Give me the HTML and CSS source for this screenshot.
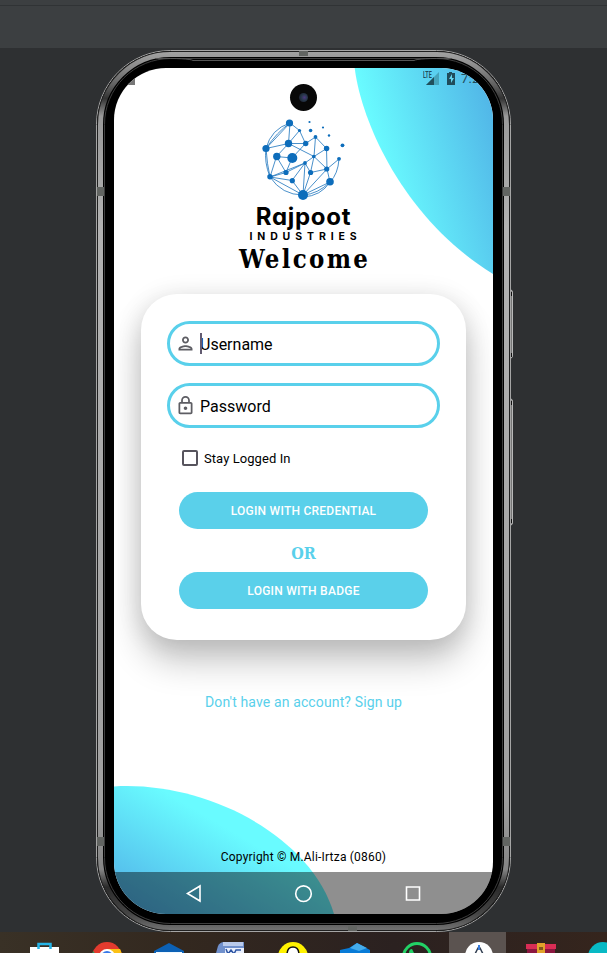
FILE: index.html
```html
<!DOCTYPE html>
<html lang="en">
<head>
<meta charset="utf-8">
<title>Rajpoot Industries</title>
<link rel="stylesheet" href="styles.css">
</head>
<body>
<div class="desktop">
  <header class="toolbar"></header>
  <main class="stage">
    <div class="phone">
      <svg class="frame" width="422" height="884" viewBox="94 49 422 884" fill="none">
        <defs>
          <linearGradient id="metal" x1="0" y1="50" x2="0" y2="931" gradientUnits="userSpaceOnUse">
            <stop offset="0" stop-color="#a5a5a5"/><stop offset=".02" stop-color="#8a8a8a"/><stop offset=".04" stop-color="#606060"/><stop offset=".055" stop-color="#333"/><stop offset=".075" stop-color="#999"/><stop offset=".2" stop-color="#b2b2b2"/><stop offset=".85" stop-color="#a0a0a0"/><stop offset=".93" stop-color="#858585"/><stop offset=".95" stop-color="#2b2b2b"/><stop offset=".98" stop-color="#444"/><stop offset="1" stop-color="#747474"/>
          </linearGradient>
        </defs>
        <path d="M508 290h3q1.500 0 1.500 3v62q0 3-1.500 3h-3zM508 399h3q1.500 0 1.500 3v120q0 3-1.500 3h-3z" fill="#777" stroke="#b8b8b8"/>
        <path d="M511 292v4M511 353v4M511 401v4M511 519v4" stroke="#111" stroke-width="2"/>
        <rect x="96.500" y="50.500" width="414" height="881" rx="74" fill="#000" stroke="#a5a5a5"/>
        <rect x="97.500" y="51.500" width="412" height="879" rx="73" stroke="#202020"/>
        <rect x="100.500" y="54.500" width="406" height="873" rx="70" stroke="url(#metal)" stroke-width="5"/>
        <rect x="104.500" y="58.500" width="398" height="865" rx="66" stroke="#3e3e3e"/>
        <path d="M155 58.500q34-.5 38 2h221q4-2.500 38-2" stroke="#555"/>
        <path d="M299 51h9v5h-9zM348 926h9v5h-9zM97 187h7v9h-7zM503 187h7v9h-7zM97 837h7v9h-7zM503 837h7v9h-7z" fill="#626562"/>
      </svg>
      <div class="screen">
        <svg class="waves" width="379" height="846" viewBox="114 68 379 846">
          <defs>
            <linearGradient id="g1" x1="374" y1="140" x2="500" y2="105" gradientUnits="userSpaceOnUse"><stop stop-color="#69fbff"/><stop offset="1" stop-color="#50b2e6"/></linearGradient>
            <linearGradient id="g2" x1="208" y1="817" x2="148" y2="919" gradientUnits="userSpaceOnUse"><stop stop-color="#69fbff"/><stop offset="1" stop-color="#51b2e8"/></linearGradient>
          </defs>
          <path fill="url(#g1)" d="M354.700 68C361 120 402 218 493 274V68z"/>
          <path fill="url(#g2)" d="M114 786.500C205 781 311 835 334 914H114z"/>
        </svg>
        <div class="status">
          <span class="lte">LTE</span>
          <svg width="60" height="18" viewBox="426 70 60 18"><path d="M439 72v13h-13z" fill="#20565f" opacity=".35"/><path d="M434 77v8h-8z" fill="#20505d"/><path d="M449 72h3v1h3v12h-8V73h2z" fill="#204c5b"/><path d="M452 74l-3 5h2v4l3-5h-2z" fill="#65d5ef"/></svg>
          <span class="clock">7:26</span>
        </div>
        <div class="notch"></div>
        <div class="camera"><i></i></div>
        <section class="brand">
          <svg class="globe" width="90" height="88" viewBox="258 115 90 88">
            <g fill="none" stroke="#1c74bd" stroke-width=".8">
              <path d="M290 123L266 148.500 288.500 143.500 290 123 299.500 130.500 288.500 143.500H305.500L299.500 130.500M305.500 143.500L315.500 137 326.500 148.500 314 156.500 288.500 143.500 276.500 156.500 292 158 305.500 143.500M315.500 137L314 156.500 327 169 326.500 148.500M314 156.500L310.500 172.500 327 169 339 159M305 163L314 156.500M305 163L303 195 310.500 172.500 305 163M305 163L286 172.500 276.500 156.500 270 177 286 172.500 292 158M305 163L270 177 292 180.500 305 163M292 180.500L303 195 270 177M303 195L327 169 330 182 303 195"/>
              <path d="M290 123Q271 129 266 148.500Q264 162 270 177Q282 195 303 195Q318 194 330 182Q338 174 339 159M266 148.500Q267 164 270 177M303 197Q321 196 330 182M290 123Q277 132 266 148.500"/>
            </g>
            <g fill="#0d6dbb"><circle cx="289.500" cy="123" r="3.600"/><circle cx="266" cy="148.500" r="3.600"/><circle cx="288.500" cy="143.500" r="3.700"/><circle cx="276.800" cy="156.500" r="3.700"/><circle cx="292.300" cy="158" r="5"/><circle cx="303" cy="195" r="5"/><circle cx="330" cy="181.800" r="3.800"/><circle cx="305.700" cy="143.500" r="2.700"/><circle cx="299.500" cy="130.500" r="1.600"/><circle cx="315.500" cy="137" r="1.900"/><circle cx="326.600" cy="148.500" r="2.700"/><circle cx="313.800" cy="156.500" r="1.800"/><circle cx="305" cy="163" r="1.900"/><circle cx="326.700" cy="169" r="2.600"/><circle cx="310.600" cy="172.500" r="2.600"/><circle cx="286" cy="172.500" r="2.600"/><circle cx="270" cy="176.800" r="2.700"/><circle cx="292.300" cy="180.700" r="2.600"/><circle cx="339" cy="158.800" r="1.900"/><circle cx="342.500" cy="145.300" r="1.900"/><circle cx="310.600" cy="130.500" r="1.800"/><circle cx="309.500" cy="122" r="1.100"/><circle cx="323" cy="127.500" r="1.100"/><circle cx="329" cy="135.500" r="1.200"/></g>
          </svg>
          <div class="name">Rajpoot</div>
          <div class="sub">INDUSTRIES</div>
          <h1>Welcome</h1>
        </section>
        <form class="card">
          <div class="field">
            <svg width="21" height="21" viewBox="0 0 24 24" fill="#5d5d63"><path d="M12 6a2 2 0 110 4 2 2 0 010-4m0 10c2.700 0 5.800 1.290 6 2H6c.23-.72 3.310-2 6-2m0-12C9.790 4 8 5.790 8 8s1.790 4 4 4 4-1.790 4-4-1.790-4-4-4zm0 10c-2.670 0-8 1.340-8 4v2h16v-2c0-2.660-5.330-4-8-4z"/></svg>
            <span class="caret"></span><span class="hint">Username</span>
          </div>
          <div class="field">
            <svg width="21" height="21" viewBox="0 0 24 24" fill="#5d5d63"><path d="M18 8h-1V6A5 5 0 007 6v2H6c-1.100 0-2 .9-2 2v10c0 1.100.9 2 2 2h12c1.100 0 2-.9 2-2V10c0-1.100-.9-2-2-2zM9 6a3 3 0 016 0v2H9V6zm9 14H6V10h12v10zm-6-3c1.100 0 2-.9 2-2s-.9-2-2-2-2 .9-2 2 .9 2 2 2z"/></svg>
            <span class="hint">Password</span>
          </div>
          <div class="stay"><i class="box"></i><span>Stay Logged In</span></div>
          <div class="btn"><span>LOGIN WITH CREDENTIAL</span></div>
          <div class="or">OR</div>
          <div class="btn badge"><span>LOGIN WITH BADGE</span></div>
        </form>
        <div class="signup">Don't have an account? Sign up</div>
        <div class="copyright">Copyright © M.Ali-Irtza (0860)</div>
        <nav class="nav">
          <svg width="24" height="24" viewBox="0 0 24 24"><path d="M18 5v15L5.500 12.500z"/></svg>
          <svg width="24" height="24" viewBox="0 0 24 24"><circle cx="12.500" cy="12.700" r="7.800"/></svg>
          <svg width="24" height="24" viewBox="0 0 24 24"><path d="M5.500 6h13v13h-13z"/></svg>
        </nav>
      </div>
    </div>
  </main>
  <footer class="taskbar">
    <div class="active"></div>
    <svg width="607" height="21" viewBox="0 932 607 21">
      <path d="M30 947h29v6H30z" fill="#fff"/><path d="M38.500 949v-5h12v5" fill="none" stroke="#25b5e8" stroke-width="2.500"/>
      <circle cx="107" cy="957" r="15" fill="#e33b2e"/><path d="M93 951l8 10-5 5q-5-7-3-15" fill="#1ca45c"/><path d="M107 949h13q4 7 0 16h-9z" fill="#fbc116"/><circle cx="107" cy="957" r="8" fill="#fff"/><circle cx="107" cy="957" r="6" fill="#3979e8"/>
      <path d="M154 953v-2l15-8 15 8v2z" fill="#0c61b5"/><path d="M156 952h26v1h-26z" fill="#eef8ff"/>
      <path d="M216 953l2-7q2-4 6-4h20v11z" fill="#7090cc"/><path d="M223 942h20v4h-20z" fill="#b9caeb"/><path d="M225 948h19v5h-19z" fill="#e9effc"/><path d="M226 949l2 5 3-4 3 4 2-4h5" fill="none" stroke="#2d55a4" stroke-width="1.500"/>
      <circle cx="293" cy="957" r="15" fill="#fff200"/><path d="M287 955q0-8 6-8t6 8" fill="#fff" stroke="#111" stroke-width="1.500"/>
      <path d="M340 953v-3l9-2 8-5 13 7v3z" fill="#087bd7"/><path d="M350 948l7-5 10 5-8 3z" fill="#45aceb"/>
      <circle cx="417" cy="957" r="13.500" fill="none" stroke="#22d266" stroke-width="3"/><path d="M409 953q0-4 3-4l2 4z" fill="#22d266"/>
      <circle cx="479" cy="956" r="14" fill="#fff"/><path d="M475 954l3-6h2l3 6" fill="none" stroke="#334052" stroke-width="1.500"/><path d="M479 945v5" stroke="#397ddd" stroke-width="2"/>
      <path d="M526 944h30v5h-30z" fill="#d92d55"/><path d="M527 949h28v4h-28z" fill="#8c1740"/><path d="M537 943h8v10h-8z" fill="#e1a32b"/><path d="M539 947h4v3h-4z" fill="#84551c"/>
      <circle cx="603" cy="957" r="15" fill="#08b9c4"/>
    </svg>
  </footer>
</div>
</body>
</html>
```
FILE: styles.css
```css
* { box-sizing: border-box; }
body { margin: 0; font-family: Roboto, sans-serif; color: #000; }
.desktop { width: 607px; height: 953px; display: flex; flex-direction: column; overflow: hidden; background: #2e3032; }
.toolbar { height: 48px; flex: none; background: #3c3f41; background-image: linear-gradient(#3c3f41 5px, #303335 5px, #303335 6px, #3c3f41 6px); }
.stage { height: 884px; flex: none; display: flex; }
.phone { position: relative; width: 422px; height: 884px; margin: 1px 0 0 94px; padding: 19px 0 0 20px; }
.frame { position: absolute; left: 0; top: 0; }
.screen { position: relative; width: 379px; height: 846px; overflow: hidden; border-radius: 52px; background: #fff; display: flex; flex-direction: column; align-items: center; }
.waves { position: absolute; left: 0; top: 0; }
.status { position: absolute; top: 2px; left: 309px; width: 80px; height: 18px; color: #204c5b; }
.status svg { position: absolute; left: 3px; top: 0; }
.lte { position: absolute; left: 0; top: 1px; font-size: 9px; line-height: 9px; font-weight: 700; transform: scaleX(.6); transform-origin: left; }
.clock { position: absolute; left: 38px; top: 1px; font-size: 13px; line-height: 16px; letter-spacing: .3px; }
.notch { position: absolute; left: 12px; top: 10px; width: 9px; height: 7px; background: #777; }
.camera { position: absolute; left: 176px; top: 16px; width: 27px; height: 27px; border-radius: 50%; background: #080808; display: grid; place-items: center; }
.camera i { width: 9px; height: 9px; border-radius: 50%; background: radial-gradient(circle at 60% 50%, #4c3a81, #263748 45%, #171425); }
.brand { position: relative; height: 226px; flex: none; padding-top: 47px; display: flex; flex-direction: column; align-items: center; }
.globe { display: block; flex: none; margin-right: 2px; }
.name { font: 700 24px/28px Inter, sans-serif; font-feature-settings: "cv11"; letter-spacing: .7px; }
.sub { font: 700 10.5px/10px Inter, sans-serif; letter-spacing: 4.9px; margin: 1px -4px 0 0; }
h1 { margin: 0 -2px 0 0; font: 700 25.5px/34px "DejaVu Serif Condensed", "DejaVu Serif", serif; letter-spacing: 2.3px; }
.card { position: relative; width: 325px; height: 346px; flex: none; padding: 27px 26px 0; border-radius: 36px; background: #fff; box-shadow: 0 22px 34px rgba(0,0,0,.22), 0 3px 26px rgba(0,0,0,.12); display: flex; flex-direction: column; align-items: center; }
.field { position: relative; width: 273px; height: 45px; flex: none; margin-bottom: 17px; border: 3px solid #59d0eb; border-radius: 23px; display: flex; align-items: center; gap: 4px; padding-left: 5px; font-size: 16px; }
.hint { padding-top: 2px; }
.caret { position: absolute; left: 30px; top: 9px; width: 1.5px; height: 21px; background: #625b71; }
.stay { align-self: stretch; height: 20px; padding-left: 15px; margin-top: 3px; display: flex; align-items: center; gap: 6px; font-size: 13px; letter-spacing: .07px; }
.box { width: 16px; height: 16px; border: 2px solid #57545d; border-radius: 2px; }
.btn { width: 249px; height: 37px; flex: none; margin-top: 24px; border-radius: 19px; background: #5ad0ea; color: #fff; font-size: 12px; font-weight: 500; letter-spacing: .25px; display: grid; place-items: center; }
.or { height: 20px; margin-top: 15px; font: 700 16px/20px "DejaVu Serif Condensed", "DejaVu Serif", serif; color: #59d0eb; }
.badge { margin-top: 8px; }
.signup { position: relative; height: 20px; margin-top: 52px; font-size: 14px; line-height: 20px; color: #59d0eb; letter-spacing: .13px; }
.copyright { position: relative; margin-top: 137px; height: 16px; font-size: 12px; line-height: 16px; letter-spacing: .2px; }
.nav { position: relative; width: 379px; height: 42px; flex: none; margin-top: auto; padding: 0 25px; background: rgba(0,0,0,.44); display: flex; justify-content: space-around; align-items: center; }
.nav svg { fill: none; stroke: #fff; stroke-width: 1.6; }
.taskbar { position: relative; height: 21px; flex: none; background: linear-gradient(90deg, #393126, #33281f 30%, #2b2120 65%, #35251d); }
.taskbar svg { position: relative; display: block; }
.active { position: absolute; left: 449px; top: 0; width: 57px; height: 21px; background: #5b5350; }
```
